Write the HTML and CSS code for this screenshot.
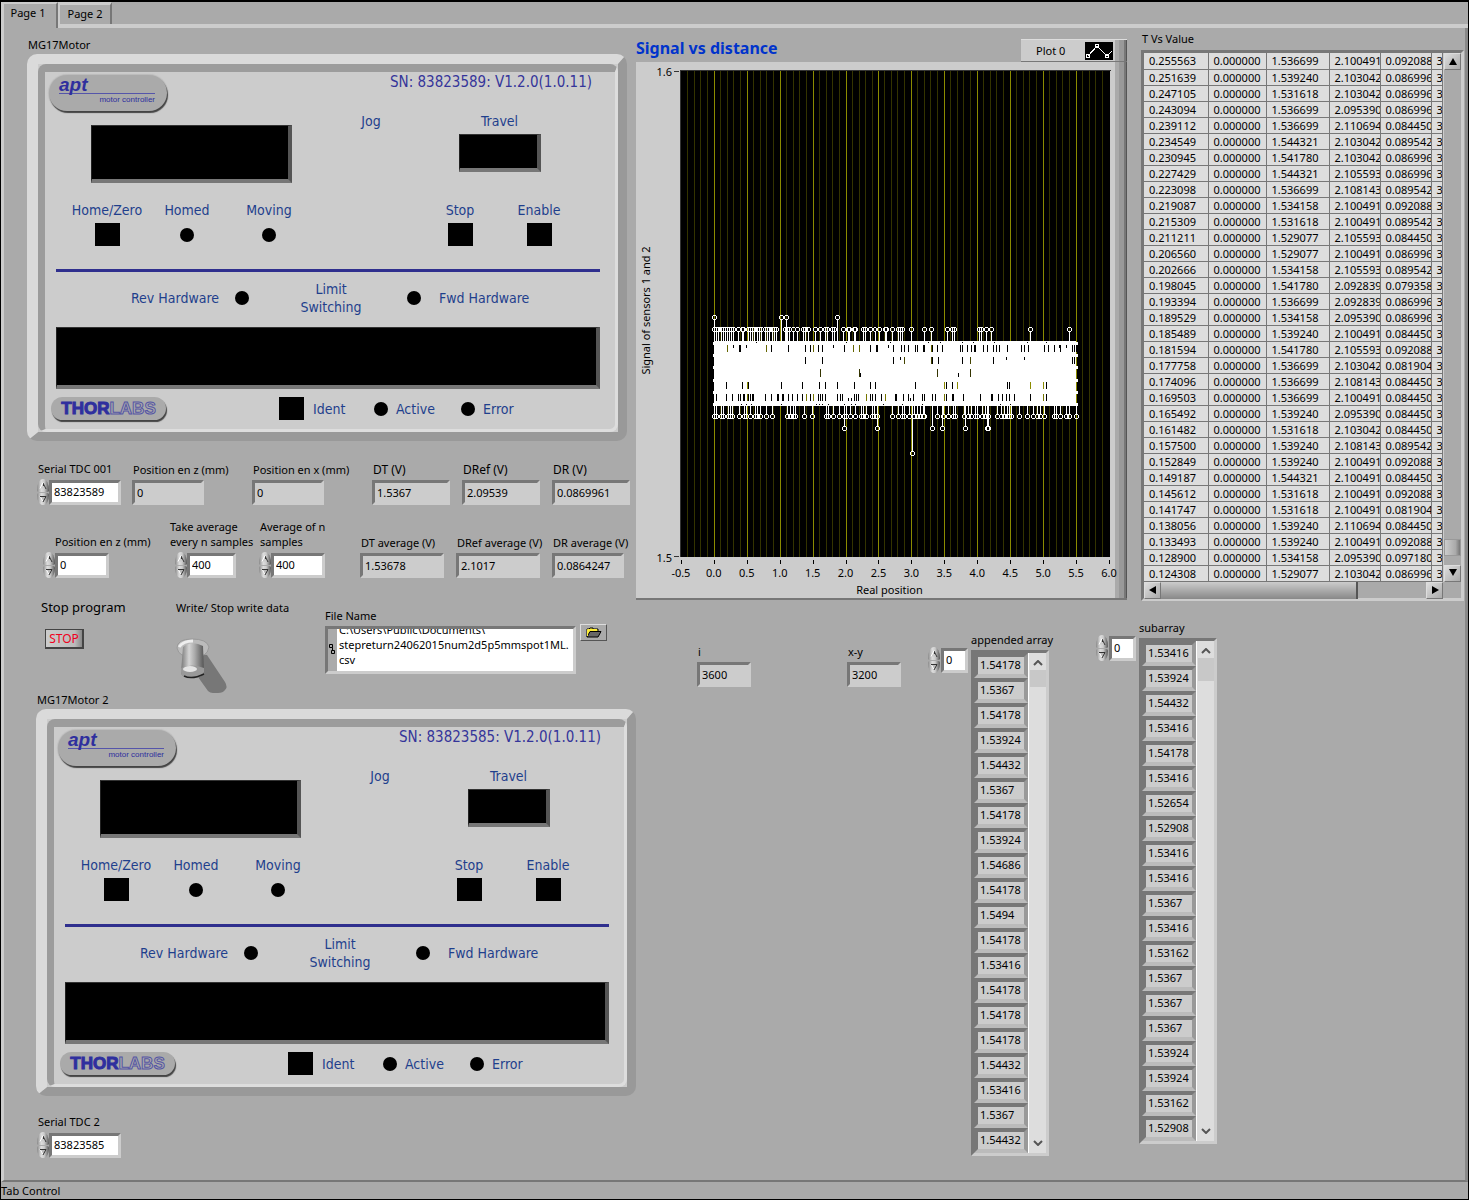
FILE: index.html
```html
<!DOCTYPE html>
<html lang="en">
<head>
<meta charset="utf-8">
<title>Tab Control</title>
<link rel="stylesheet" href="styles.css">
</head>
<body>
<svg class="defs" aria-hidden="true">
  <symbol id="up" viewBox="0 0 12 12"><path d="M3.500 9.500L6 4L9 9.500Z" fill="#ccc"/><path d="M6 4L9 10M6.500 5V7" fill="none" stroke="#333"/><path d="M3 9.500L6 3.500" stroke="#fff" fill="none"/></symbol>
  <symbol id="down" viewBox="0 0 12 12"><path d="M3 3.500L6 8.500L9 3.500Z" fill="#bbb"/><path d="M3 3L6 8.500" fill="none" stroke="#fff"/><path d="M3 3.500H9L6 9" stroke="#333" fill="none"/></symbol>
</svg>
<nav class="tabs">
  <button class="tab tab-active" type="button">Page 1</button>
  <button class="tab" type="button">Page 2</button>
</nav>
<main class="page">
  <div class="left">
    <h2 class="caption">MG17Motor</h2>
    <section class="device">
      <div class="face">
        <div class="face-head">
          <div class="badge"><b>apt</b><span>motor controller</span></div>
          <div class="serial">SN: 83823589: V1.2.0(1.0.11)</div>
        </div>
        <div class="displays">
          <div class="lcd lcd-main"></div>
          <span class="jog">Jog</span>
          <div class="travel"><span>Travel</span><div class="lcd lcd-small"></div></div>
        </div>
        <div class="status">
          <label>Home/Zero<button type="button" class="key"></button></label>
          <div>Homed<i class="lamp"></i></div>
          <div>Moving<i class="lamp"></i></div>
          <label class="stop-key">Stop<button type="button" class="key"></button></label>
          <label>Enable<button type="button" class="key"></button></label>
        </div>
        <hr>
        <div class="limits">
          <span class="rev">Rev Hardware</span><i class="lamp"></i>
          <span class="mid">Limit<br>Switching</span><i class="lamp"></i>
          <span class="fwd">Fwd Hardware</span>
        </div>
        <div class="lcd lcd-wide"></div>
        <div class="face-foot">
          <div class="maker"><b>THOR</b><b class="hollow">LABS</b></div>
          <label class="ident"><button type="button" class="key"></button>Ident</label>
          <div class="pair active"><i class="lamp"></i>Active</div>
          <div class="pair"><i class="lamp"></i>Error</div>
        </div>
      </div>
    </section>

    <div class="fields row-one">
      <div class="field"><label for="s1">Serial TDC 001</label><div class="num"><span class="spin"><button type="button" aria-label="Up"><svg><use href="#up"/></svg></button><button type="button" aria-label="Down"><svg><use href="#down"/></svg></button></span><input id="s1" value="83823589"></div></div>
      <div class="field"><label for="pz">Position en z (mm)</label><input class="read" id="pz" value="0" readonly></div>
      <div class="field"><label for="px">Position en x (mm)</label><input class="read" id="px" value="0" readonly></div>
      <div class="field volts"><label for="dt">DT (V)</label><input class="read" id="dt" value="1.5367" readonly></div>
      <div class="field volts"><label for="dref">DRef (V)</label><input class="read" id="dref" value="2.09539" readonly></div>
      <div class="field volts"><label for="dr">DR (V)</label><input class="read" id="dr" value="0.0869961" readonly></div>
    </div>
    <div class="fields row-two">
      <div class="field"><label class="inset" for="pz2">Position en z (mm)</label><div class="num"><span class="spin"><button type="button" aria-label="Up"><svg><use href="#up"/></svg></button><button type="button" aria-label="Down"><svg><use href="#down"/></svg></button></span><input id="pz2" value="0"></div></div>
      <div class="field every"><label for="av1">Take average<br>every n samples</label><div class="num"><span class="spin"><button type="button" aria-label="Up"><svg><use href="#up"/></svg></button><button type="button" aria-label="Down"><svg><use href="#down"/></svg></button></span><input id="av1" value="400"></div></div>
      <div class="field"><label for="av2">Average of n<br>samples</label><div class="num"><span class="spin"><button type="button" aria-label="Up"><svg><use href="#up"/></svg></button><button type="button" aria-label="Down"><svg><use href="#down"/></svg></button></span><input id="av2" value="400"></div></div>
      <div class="field"><label for="dta">DT average (V)</label><input class="read" id="dta" value="1.53678" readonly></div>
      <div class="field"><label for="drefa">DRef average (V)</label><input class="read" id="drefa" value="2.1017" readonly></div>
      <div class="field"><label for="dra">DR average (V)</label><input class="read narrow" id="dra" value="0.0864247" readonly></div>
    </div>
    <div class="row-three">
      <div class="stop-box"><span>Stop program</span><button type="button" class="stop">STOP</button></div>
      <div class="write-box"><span>Write/ Stop write data</span>
        <button type="button" class="toggle" aria-label="Write/ Stop write data">
          <svg width="54" height="60" viewBox="0 0 54 60">
            <defs><linearGradient id="tg"><stop offset="0" stop-color="#777"/><stop offset=".35" stop-color="#d4d4d4"/><stop offset=".6" stop-color="#aaa"/><stop offset="1" stop-color="#555"/></linearGradient></defs>
            <path d="M24 16L31 17L49 44Q52 49 49 52Q47 55 42 55H37Q34 55 32 53L22 39Z" fill="#777"/>
            <path d="M1 10Q1 1 16 1Q31 1 33 9Q32 15 28 17H6Q2 15 1 10Z" fill="#bbb" stroke="#999"/>
            <path d="M3 9Q7 3 17 3" stroke="#eee" stroke-width="3" fill="none"/>
            <path d="M7 9Q16 2 27 8L28 34Q28 40 16 40Q5 40 5 34Z" fill="url(#tg)"/>
            <path d="M5 30Q16 25 28 30L28 34Q27 40 16 40Q5 40 5 34Z" fill="#999"/>
            <ellipse cx="14" cy="31" rx="7" ry="3" fill="#e4e4e4"/>
            <path d="M8 38Q16 42 28 36" stroke="#222" fill="none" stroke-width="1.500"/>
          </svg>
        </button>
      </div>
      <div class="file-box"><label for="file">File Name</label>
        <div class="file-line">
          <div class="path"><svg width="8" height="42" viewBox="0 0 8 42"><path d="M1.500 15.500h3v3h-3zM3.500 21.500h3v3h-3zM4.500 18.500V21.500" fill="none" stroke="#000"/></svg><textarea id="file" spellcheck="false">C:\Users\Public\Documents\
stepreturn24062015num2d5p5mmspot1ML.
csv</textarea></div>
          <button type="button" class="browse" aria-label="Browse"><svg width="18" height="11" viewBox="0 0 18 11"><path d="M2 10V2H4L5 1H8V2H13V4" fill="#ffef3a" stroke="#000"/><path d="M2 10L5 4.500H16L13 10Z" fill="#666" stroke="#000"/><path d="M2.500 9V2.500H12" stroke="#ffef3a" fill="none"/></svg></button>
        </div>
      </div>
    </div>

    <h2 class="caption second">MG17Motor 2</h2>
    <section class="device second">
      <div class="face">
        <div class="face-head">
          <div class="badge"><b>apt</b><span>motor controller</span></div>
          <div class="serial">SN: 83823585: V1.2.0(1.0.11)</div>
        </div>
        <div class="displays">
          <div class="lcd lcd-main"></div>
          <span class="jog">Jog</span>
          <div class="travel"><span>Travel</span><div class="lcd lcd-small"></div></div>
        </div>
        <div class="status">
          <label>Home/Zero<button type="button" class="key"></button></label>
          <div>Homed<i class="lamp"></i></div>
          <div>Moving<i class="lamp"></i></div>
          <label class="stop-key">Stop<button type="button" class="key"></button></label>
          <label>Enable<button type="button" class="key"></button></label>
        </div>
        <hr>
        <div class="limits">
          <span class="rev">Rev Hardware</span><i class="lamp"></i>
          <span class="mid">Limit<br>Switching</span><i class="lamp"></i>
          <span class="fwd">Fwd Hardware</span>
        </div>
        <div class="lcd lcd-wide"></div>
        <div class="face-foot">
          <div class="maker"><b>THOR</b><b class="hollow">LABS</b></div>
          <label class="ident"><button type="button" class="key"></button>Ident</label>
          <div class="pair active"><i class="lamp"></i>Active</div>
          <div class="pair"><i class="lamp"></i>Error</div>
        </div>
      </div>
    </section>
    <div class="fields row-last">
      <div class="field"><label for="s2">Serial TDC 2</label><div class="num"><span class="spin"><button type="button" aria-label="Up"><svg><use href="#up"/></svg></button><button type="button" aria-label="Down"><svg><use href="#down"/></svg></button></span><input id="s2" value="83823585"></div></div>
    </div>
  </div>

  <div class="right">
    <div class="top">
      <section class="chart">
        <div class="chart-head">
          <h2>Signal vs distance</h2>
          <div class="legend">Plot 0
            <svg width="28" height="18" viewBox="0 0 28 18" shape-rendering="crispEdges"><path d="M0 0H28V18H0Z" fill="#000"/><path d="M3 14L12 4L22 14L27 9" stroke="#fff" fill="none"/><path d="M1.500 12.500h3v3h-3zM10.500 2.500h3v3h-3zM20.500 12.500h3v3h-3z" stroke="#fff" fill="none"/></svg>
          </div>
        </div>
        <div class="chart-body"><svg id="plot" viewBox="0 0 480 537" role="img" aria-label="Signal vs distance"></svg></div>
      </section>
      <section class="values">
        <h2 class="caption">T Vs Value</h2>
        <div class="sheet">
          <table><colgroup><col class="c1"><col class="c2"><col class="c3"><col class="c4"><col class="c4"><col></colgroup><tbody id="rows"></tbody></table>
          <div class="vbar"><button type="button" aria-label="Scroll up"><svg width="10" height="8"><path d="M5 0L9 7H1Z"/></svg></button><span class="vthumb"></span><button type="button" aria-label="Scroll down"><svg width="10" height="8"><path d="M5 7L9 0H1Z"/></svg></button></div>
          <div class="hbar"><button type="button" aria-label="Scroll left"><svg width="8" height="8"><path d="M0 4L7 0V8Z"/></svg></button><span class="hthumb"></span><button type="button" aria-label="Scroll right"><svg width="8" height="8"><path d="M8 4L1 0V8Z"/></svg></button></div>
        </div>
      </section>
    </div>
    <div class="bottom">
      <div class="field count"><label for="i">i</label><input class="read" id="i" value="3600" readonly></div>
      <div class="field count"><label for="xy">x-y</label><input class="read" id="xy" value="3200" readonly></div>
      <div class="array appended">
        <div class="num"><span class="spin"><button type="button" aria-label="Up"><svg><use href="#up"/></svg></button><button type="button" aria-label="Down"><svg><use href="#down"/></svg></button></span><input aria-label="appended array index" value="0"></div>
        <div class="stack"><span>appended array</span><div class="list"><ol id="appended"></ol><div class="scroll"><svg width="10" height="6"><path d="M1 5L5 1L9 5"/></svg><i></i><svg width="10" height="6"><path d="M1 1L5 5L9 1"/></svg></div></div></div>
      </div>
      <div class="array">
        <div class="num"><span class="spin"><button type="button" aria-label="Up"><svg><use href="#up"/></svg></button><button type="button" aria-label="Down"><svg><use href="#down"/></svg></button></span><input aria-label="subarray index" value="0"></div>
        <div class="stack"><span>subarray</span><div class="list"><ol id="sub"></ol><div class="scroll tall"><svg width="10" height="6"><path d="M1 5L5 1L9 5"/></svg><i></i><svg width="10" height="6"><path d="M1 1L5 5L9 1"/></svg></div></div></div>
      </div>
    </div>
  </div>
</main>
<footer>Tab Control</footer>
<script src="panel.js"></script>
</body>
</html>
```
FILE: styles.css
```css
* { box-sizing: border-box; }
body {
  margin: 0;
  min-height: 100vh;
  display: flex;
  flex-direction: column;
  background: #aaa;
  border-top: 2px solid #000;
  border-left: 1px solid #000;
  border-right: 1px solid #000;
  border-bottom: 1px solid #000;
  font: 11px/16px "Noto Sans", "Open Sans", sans-serif;
  color: #000;
}
.defs { display: none; }
button, input, textarea { font: inherit; color: inherit; margin: 0; padding: 0; border: 0; background: none; border-radius: 0; }
input:focus, textarea:focus { outline: 0; }
h2 { margin: 0; font: inherit; }

/* tabs */
.tabs { display: flex; align-items: flex-end; height: 26px; }
.tab {
  width: 54px;
  height: 24px;
  padding: 0 0 4px;
  border-top: 3px solid #ccc;
  border-left: 2px solid #ccc;
  border-right: 2px solid #777;
  align-self: flex-start;
}
.tab-active { width: 57px; height: 26px; padding: 0 4px 6px 0; border-top-width: 2px; border-left-width: 3px; }
.tabs::after { content: ""; flex: 1; height: 4px; background: #ccc; margin-left: -54px; }
.page {
  flex: 1;
  display: flex;
  align-items: flex-start;
  border-left: 3px solid #ccc;
  border-right: 3px solid #888;
  border-bottom: 2px solid #777;
  padding-left: 23px;
}
footer { height: 17px; line-height: 18px; }

.left { flex: 0 0 608px; padding-top: 9px; }
.right { flex: 1; min-width: 0; }
.caption { height: 17px; padding-left: 1px; white-space: nowrap; }
.caption.second { margin-left: 9px; }

/* motor controller faceplate */
.device {
  width: 600px;
  border: solid;
  border-width: 10px 9px 9px 11px;
  border-color: #dadada #999 #999 #dadada;
  border-radius: 10px;
  background: #ccc;
}
.device.second { margin-left: 9px; }
.face {
  border: solid;
  border-width: 8px 3px 3px 7px;
  border-color: #9c9c9c #ddd #ddd #9c9c9c;
  border-radius: 8px;
  height: 368px;
  padding: 3px 15px 0 11px;
  background: #ccc;
  font: 14px/18px "DejaVu Sans Condensed", "Noto Sans", sans-serif;
  color: #1f3f8c;
}
.face-head { display: flex; justify-content: space-between; height: 37px; }
.badge {
  width: 118px;
  height: 36px;
  margin-left: -7px;
  border-radius: 18px;
  background: #aaa;
  box-shadow: 1px 2px 1px #444, 0 0 1px 1px #bbb;
  padding: 0 12px 0 10px;
  font-family: "Liberation Sans", sans-serif;
  color: #2f2f9e;
}
.badge b { display: block; font-style: italic; font-size: 19px; line-height: 19px; height: 19px; border-bottom: 1px solid #55a; }
.badge span { display: block; text-align: right; white-space: nowrap; font-size: 8px; line-height: 11px; -webkit-text-stroke: 0; }
.serial { font-size: 15px; line-height: 14px; color: #35359a; padding-right: 8px; }
.displays { display: flex; height: 89px; padding-left: 35px; }
.lcd { background: #000; border: solid; border-color: #333 #555 #777 #222; border-width: 1px 4px 4px 1px; }
.lcd-main { width: 201px; height: 58px; margin-top: 13px; }
.jog { width: 158px; text-align: center; }
.travel { width: 99px; text-align: center; margin-right: -9px; }
.lcd-small { width: 82px; height: 38px; margin: 4px 0 0 9px; }
.status { display: grid; grid-template-columns: 102px 58px 106px 98px 80px 78px; height: 45px; }
.status > * { display: flex; flex-direction: column; align-items: center; gap: 4px; }
.status .stop-key { grid-column: 5; }
.key { width: 25px; height: 23px; background: #000; flex: none; display: block; }
.lamp { width: 14px; height: 14px; border-radius: 7px; background: #000; display: block; flex: none; }
.status .lamp { margin-top: 5px; }
.face hr { width: 544px; height: 3px; margin: 23px 0 8px; border: 0; background: #2f2f8e; }
.limits { display: flex; align-items: center; height: 36px; white-space: nowrap; }
.rev { width: 179px; padding-left: 75px; }
.mid { width: 158px; padding-left: 6px; text-align: center; line-height: 18px; }
.fwd { padding-left: 18px; }
.lcd-wide { width: 544px; height: 62px; margin: 11px 0 7px; }
.face-foot { display: flex; align-items: center; height: 25px; }
.maker {
  width: 115px; height: 23px; margin-left: -5px; border-radius: 12px; background: #aaa;
  box-shadow: 1px 2px 1px #444;
  font: bold 17px/23px "Liberation Sans", sans-serif;
  color: #2f2f9e; text-align: center;
}
.maker b:first-child { -webkit-text-stroke: 1px #2f2f9e; }
.maker .hollow { color: #aaa; -webkit-text-stroke: 1px #5555a5; }
.ident { display: flex; align-items: center; gap: 9px; width: 95px; margin-left: 113px; }
.pair { display: flex; align-items: center; gap: 8px; }
.active { width: 87px; }

/* numeric controls */
.fields { display: flex; align-items: flex-end; white-space: nowrap; }
.field { display: flex; flex-direction: column; gap: 3px; line-height: 15px; }
.field label { padding-left: 1px; }
.field input, .num input {
  width: 72px; height: 25px;
  border: solid;
  border-width: 3px;
  border-color: #777 #ccc #ccc #777;
  background: #fff;
  padding: 0 0 1px 2px;
}
.field .read { background: #ccc; }
.num { display: flex; align-items: center; }
.spin { width: 12px; height: 26px; display: flex; flex-direction: column; gap: 1px; }
.spin button { width: 12px; flex: 1; border-radius: 6px 6px 2px 2px / 12px 12px 2px 2px; background: linear-gradient(90deg, #888, #ddd 35%, #ccc 60%, #555); }
.spin button + button { border-radius: 2px 2px 6px 6px / 2px 2px 12px 12px; }
.spin svg { display: block; width: 12px; height: 12px; }
.row-one { display: grid; grid-template-columns: 95px 120px 120px 90px 90px 78px; padding: 20px 0 0 10px; align-items: end; }
.volts input { width: 78px; }
.volts label { font-size: 12px; }
.row-two { display: grid; grid-template-columns: 132px 84px 101px 96px 96px 80px; padding: 14px 0 0 16px; align-items: end; }
.row-two .field { min-width: 0; }
.row-two .read { width: 84px; }
.row-two .read.narrow { width: 72px; }
.row-two .num input { width: 54px; }
.row-two .inset { padding-left: 12px; }
.row-two .every { margin-left: -6px; }
.row-two .every .num { padding-left: 6px; }
.row-two .every .num input { width: 49px; }
.row-last { padding: 18px 0 10px 10px; }

.row-three { display: flex; height: 114px; padding: 21px 0 0 14px; white-space: nowrap; }
.stop-box { width: 135px; font-size: 13px; }
.stop { display: block; margin: 14px 0 0 4px; width: 39px; height: 20px; border: 1px solid #444; border-width: 1px 2px 2px 1px; background: linear-gradient(90deg, #ccc, #bbb 80%, #888); color: #f00020; font-size: 12px; line-height: 16px; }
.write-box { width: 149px; padding-top: 1px; }
.toggle { display: block; margin-top: 22px; width: 54px; height: 60px; }
.file-box { padding-top: 9px; }
.file-line { display: flex; align-items: flex-start; gap: 4px; }
.path { display: flex; width: 251px; height: 48px; margin-top: 2px; border: solid; border-width: 3px; border-color: #777 #ccc #ccc #777; }
.path svg { flex: none; margin-right: 1px; }
.path textarea { flex: 1; min-width: 0; height: 42px; line-height: 15px; padding: 0 0 4px 2px; background: #fff; resize: none; overflow: hidden; white-space: pre; font-size: 11px; }
.browse { width: 27px; height: 17px; border: 1px solid; border-color: #ddd #555 #555 #ddd; background: #aaa; display: flex; justify-content: center; align-items: center; }

/* chart */
.top { display: flex; gap: 14px; padding-right: 1px; }
.chart { flex: 1; min-width: 0; padding-top: 11px; }
.chart-head { display: flex; justify-content: space-between; height: 23px; }
.chart-head h2 { font-weight: bold; font-size: 16px; line-height: 18px; color: #0033cc; white-space: nowrap; }
.legend, .chart-body { background: linear-gradient(to left, #555 0 1px, #777 1px 3px, #999 3px 8px, #aaa 8px 12px, #ccc 12px); }
.legend { width: 106px; display: flex; align-items: center; justify-content: space-between; padding: 0 14px 0 15px; border-bottom: 1px solid #777; border-top: 1px solid #ddd; }
.chart-body { padding-right: 12px; border-bottom: 2px solid #777; }
#plot { display: block; width: 100%; overflow: visible; }
#plot text { font-size: 11px; }

/* values table */
.values { width: 323px; padding-top: 3px; }
.values .caption { height: 19px; }
.sheet { display: grid; grid-template-columns: 299px 18px; border: solid; border-width: 3px; border-color: #777 #ccc #ccc #777; height: 551px; align-content: start; }
.sheet table { table-layout: fixed; width: 299px; border-collapse: collapse; background: #ddd; }
.sheet td { height: 16px; padding: 0 0 0 5px; overflow: hidden; white-space: nowrap; line-height: 15px; border-right: 1px solid #777; border-bottom: 1px solid #777; }
.c1 { width: 64px; } .c2 { width: 58px; } .c3 { width: 63px; } .c4 { width: 51px; }
.sheet button { width: 17px; height: 17px; background: linear-gradient(135deg, #ddd, #aaa); border: 1px solid; border-color: #ddd #777 #777 #ddd; display: grid; place-items: center; flex: none; }
.vbar { display: flex; flex-direction: column; border-left: 1px solid #ccc; }
.vthumb { margin-top: auto; height: 17px; background: linear-gradient(90deg, #ccc, #aaa 70%, #777); border: 1px solid #999; }
.vthumb + button { margin-top: 9px; }
.hbar { display: flex; height: 17px; }
.hthumb { width: 197px; background: linear-gradient(#ccc, #aaa 50%, #888); border-right: 2px solid #555; margin-right: auto; }

/* arrays */
.bottom { display: flex; align-items: flex-start; padding-left: 61px; }
.count { margin-top: 43px; width: 150px; }
.count input { width: 54px; }
.array { display: flex; gap: 3px; }
.array .num { height: 26px; margin-top: 34px; }
.array .num input { width: 27px; margin-left: 1px; }
.appended { width: 168px; margin-top: 12px; }
.bottom .appended { margin-left: -69px; }
.stack { white-space: nowrap; padding-top: 19px; width: 78px; }
.stack span { display: block; height: 18px; }
.list { display: flex; width: 78px; border: 3px solid; border-color: #777 #ccc #ccc #777; }
.list ol { list-style: none; margin: 0; padding: 0; width: 54px; }
.list li { height: 25px; border: solid; border-width: 4px; border-color: #777 #999 #bbb #777; background: #ccc; padding-left: 2px; line-height: 16px; }
.scroll { width: 18px; background: #ddd; border-left: 1px solid #fff; display: flex; flex-direction: column; align-items: center; padding: 7px 0; }
.scroll path { fill: none; stroke: #555; stroke-width: 2; }
.scroll i { width: 16px; height: 17px; background: #c8c8c8; margin: 4px 0 auto; }
.scroll.tall i { height: 23px; }
```
FILE: panel.js
```javascript
const cols = [
`0.255563 0.251639 0.247105 0.243094 0.239112 0.234549 0.230945 0.227429 0.223098 0.219087 0.215309 0.211211 0.206560 0.202666 0.198045 0.193394 0.189529 0.185489 0.181594 0.177758 0.174096 0.169503 0.165492 0.161482 0.157500 0.152849 0.149187 0.145612 0.141747 0.138056 0.133493 0.128900 0.124308`,
`1.536699 1.539240 1.531618 1.536699 1.536699 1.544321 1.541780 1.544321 1.536699 1.534158 1.531618 1.529077 1.529077 1.534158 1.541780 1.536699 1.534158 1.539240 1.541780 1.536699 1.536699 1.536699 1.539240 1.531618 1.539240 1.539240 1.544321 1.531618 1.531618 1.539240 1.539240 1.534158 1.529077`,
`2.100491 2.103042 2.103042 2.095390 2.110694 2.103042 2.103042 2.105593 2.108143 2.100491 2.100491 2.105593 2.100491 2.105593 2.092839 2.092839 2.095390 2.100491 2.105593 2.103042 2.108143 2.100491 2.095390 2.103042 2.108143 2.100491 2.100491 2.100491 2.100491 2.110694 2.100491 2.095390 2.103042`,
`0.092088 0.086996 0.086996 0.086996 0.084450 0.089542 0.086996 0.086996 0.089542 0.092088 0.089542 0.084450 0.086996 0.089542 0.079358 0.086996 0.086996 0.084450 0.092088 0.081904 0.084450 0.084450 0.084450 0.084450 0.089542 0.092088 0.084450 0.092088 0.081904 0.084450 0.092088 0.097180 0.086996`
].map(s => s.split(' '));
document.getElementById('rows').innerHTML = cols[0].map((v, i) =>
  `<tr><td>${v}</td><td>0.000000</td><td>${cols[1][i]}</td><td>${cols[2][i]}</td><td>${cols[3][i]}</td><td>3</td></tr>`).join('');

const fill = (id, s) => document.getElementById(id).innerHTML = s.split(' ').map(v => `<li>${v}</li>`).join('');
fill('appended', '1.54178 1.5367 1.54178 1.53924 1.54432 1.5367 1.54178 1.53924 1.54686 1.54178 1.5494 1.54178 1.53416 1.54178 1.54178 1.54178 1.54432 1.53416 1.5367 1.54432');
fill('sub', '1.53416 1.53924 1.54432 1.53416 1.54178 1.53416 1.52654 1.52908 1.53416 1.53416 1.5367 1.53416 1.53162 1.5367 1.5367 1.5367 1.53924 1.53924 1.53162 1.52908');

const X = v => Math.round(v / 3) - 5;
const n = s => s.split(' ').map(Number);
let g = '<path d="M45 9H475V496H45Z" fill="#000"/>';
g += '<g shape-rendering="crispEdges" stroke-width="1">';
for (let k = 1; k < 65; k++) {
  const x = Math.floor(45 + k * 6.6) + .5;
  g += `<path d="M${x} 9V496" stroke="${k % 5 ? '#333300' : '#8c8c00'}"/>`;
}
g += '<path d="M44.5 496V8.500H476M38 9.500H43M38 495.500H43" stroke="#333" fill="none"/>';
for (let k = 0; k <= 13; k++) g += `<path d="M${45.5 + k * 33} 499V503" stroke="#000"/>`;
g += '<path d="M78 280H441V345H78Z" fill="#fff"/>';
for (const y of [281, 293, 305, 318, 330, 342]) g += `<path d="M77 ${y}h2v3h-2zM440 ${y}h3v3h-3z" fill="#fff"/>`;
const points = [
  [256, 282, '250 451 466 617 619'],
  [268, 282, '250 255 262 270 276 282 288 294 300 306 320 332 337 352 358 364 370 378 384 390 402 408 415 424 430 436 462 468 474 486 499 517 521 532 553 568 583 587 602 608 636 651 655 668 671 697 702 716 733 747 766 769 787 805 810 815 842 883 902 952 966 971 1048 1054 1069 1084 1201 1318'],
  [355, 344, '250 254 271 275 291 297 302 325 338 346 356 373 377 388 406 424 469 477 487 491 520 542 585 591 607 625 638 645 656 673 690 697 705 722 728 740 787 805 815 823 838 853 862 870 878 883 922 940 955 970 975 1003 1014 1024 1036 1042 1055 1066 1074 1102 1112 1122 1130 1138 1144 1168 1190 1192 1210 1222 1230 1243 1273 1279 1291 1309 1318 1339'],
  [367, 344, '640 742 907 937 1006 1070 1073'],
  [392, 344, '847']
];
for (const [y, base, list] of points) for (const v of n(list)) {
  const x = X(v) + .5;
  g += `<path d="M${x} ${y + (base > y ? 2 : -2)}V${base}M${x - 1.5} ${y - 1.5}h3M${x - 1.5} ${y + 2.5}h3M${x - 2} ${y - 1}v3M${x + 2} ${y - 1}v3" stroke="#fff"/>`;
}
const gaps = [
  [284, 7, '323 326 421 472 523 538 562 574 640 718 737 742 790 814 823 835 855 862 880 883 907 922 937 991 997 1010 1024 1031 1036 1060 1070 1090 1099 1108 1130 1174 1183 1195 1243 1255 1273 1291 1327 1333 1339', '#000'],
  [284, 3, '307 346 607 775 1288 1309', '#000'],
  [284, 7, '289 406 547 667 685 904', '#666600'],
  [296, 7, '523 574 790 907 925 997 1090 1327 1333', '#000'],
  [296, 7, '823 904 1021', '#444400'],
  [296, 3, '811 1129 1183', '#000'],
  [308, 8, '568 685 922 1021', '#333300'],
  [312, 4, '688 985', '#000'],
  [321, 7, '286 334 352 451 514 565 583 619 670 718 733 856 949 967 1130 1138 1249', '#000'],
  [321, 7, '349 943 982 1201 1240', '#8c8c00'],
  [333, 7, '256 286 304 322 328 337 340 352 358 362 367 403 421 439 442 454 457 472 484 499 514 538 562 568 574 583 619 628 634 670 676 682 718 724 733 754 796 799 820 835 850 877 883 907 916 949 967 970 1000 1051 1084 1087 1105 1115 1129 1138 1153 1201 1249', '#000'],
  [333, 7, '349 526 547 706 766 943 1240', '#777700'],
  [337, 3, '652 661 841', '#000'],
  [343, 1, '330 345 360 450 556 565 572 590 640 660 671 760 815 876 1110 1140', '#000'],
  [281, 1, '376 646 780 895 930 997 1030 1093 1190 1249', '#000']
];
for (const [y, h, list, c] of gaps) for (const v of n(list)) g += `<rect x="${X(v)}" y="${y}" width="1" height="${h}" fill="${c}"/>`;
g += '</g>';
for (let k = 0; k <= 13; k++) g += `<text x="${45 + k * 33}" y="516" text-anchor="middle">${(k / 2 - .5).toFixed(1)}</text>`;
g += '<text x="36" y="14" text-anchor="end">1.6</text><text x="36" y="501" text-anchor="end">1.5</text>';
g += '<text x="254" y="533" text-anchor="middle">Real position</text>';
g += '<text transform="translate(14 249) rotate(-90)" text-anchor="middle">Signal of sensors 1 and 2</text>';
document.getElementById('plot').innerHTML = g;

const file = document.getElementById('file');
file.scrollTop = file.scrollHeight;
```
